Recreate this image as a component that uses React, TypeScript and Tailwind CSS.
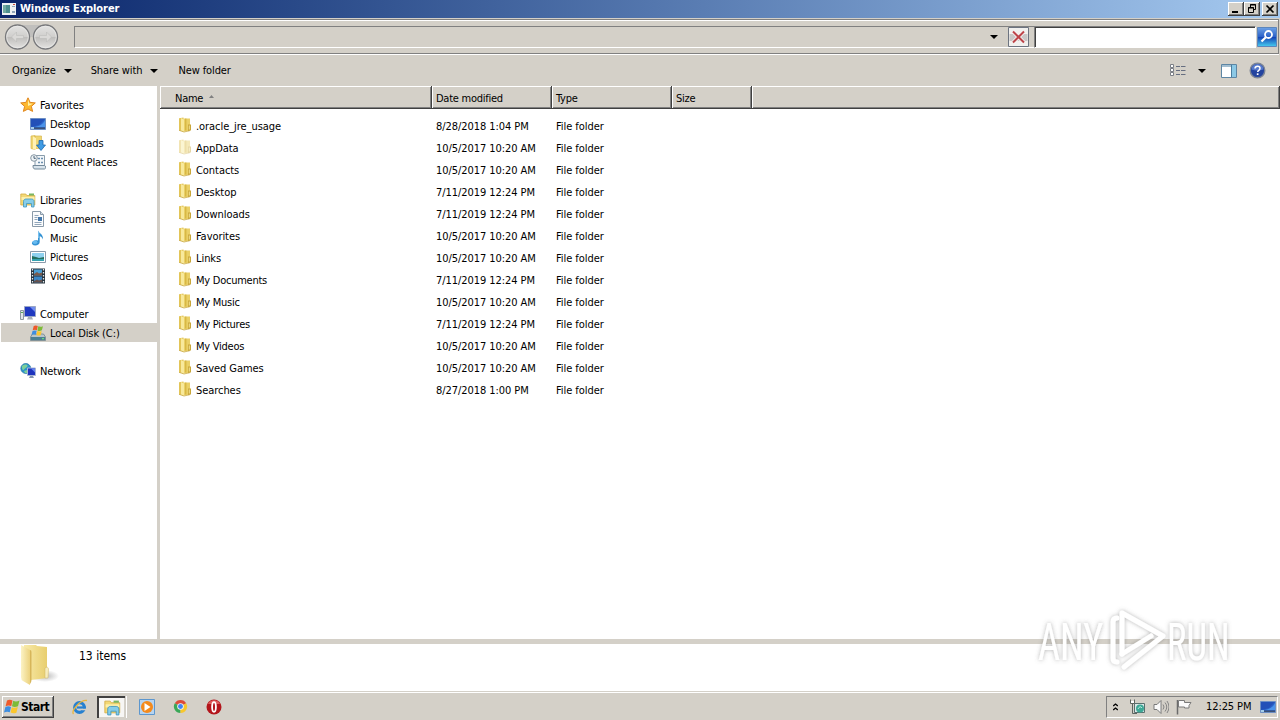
import type { ReactNode } from "react"

type IconProps = { className?: string }

function Svg({ size = 16, className = "", children }: { size?: number; className?: string; children: ReactNode }) {
  return (
    <svg width={size} height={size} viewBox="0 0 16 16" className={`shrink-0 ${className}`} fill="none">
      {children}
    </svg>
  )
}

function StarIcon() {
  return (
    <Svg>
      <path d="M8 .8l2.100 4.600 5.200.500-3.900 3.500 1.200 5L8 12 3.400 14.400l1.200-5L.7 5.900l5.200-.500z" fill="#fdb82e" stroke="#e0861e" />
      <path d="M8 2.500l1.300 4 3.700.3L8 9z" fill="#fff3a8" />
    </Svg>
  )
}

function DesktopIcon() {
  return (
    <Svg>
      <path d="M.5 2.500h15v11H.5z" fill="#2b62c9" stroke="#6d8fc4" />
      <path d="M1 3h14L9 9 1 11z" fill="#2350b8" />
      <path d="M15 4v7H5c5-1 8-3 10-7z" fill="#4b93ea" />
      <path d="M1 11.500h14V13H1z" fill="#3c5275" />
      <path d="M1 11h3v2H1z" fill="#a5cdea" />
    </Svg>
  )
}

function DownloadsIcon() {
  return (
    <Svg>
      <path d="M1 1l4-.5v14l-4-1zM5 1h6.500v12.500H5z" fill="#f0d772" stroke="#d9b851" strokeWidth=".7" />
      <path d="M3 1.500l3 1.500v12l-3-1z" fill="#fff2b6" />
      <path d="M9 5.500h4v4.500h2.500L11 15.500 6.500 10H9z" fill="#3f9be4" stroke="#1c68ad" strokeWidth=".8" />
    </Svg>
  )
}

function RecentIcon() {
  return (
    <Svg>
      <path d="M5 1.500h9.500V12H5z" fill="#f3f7fa" stroke="#899cab" />
      <path d="M3 11.500h11.500c1.500 0 1.500 3.500 0 3.500H5c-1.500 0-2-1-2-3.500z" fill="#d8e3eb" stroke="#73899a" />
      <path d="M8 4.500h2M11 4.500h2M8 8.500h2M11 8.500h2" stroke="#6c8fae" strokeWidth="1.500" />
      <circle cx="4" cy="4" r="3.300" fill="#eef3f6" stroke="#8797a3" />
      <path d="M4 2v2.300h1.800" stroke="#4a6074" />
    </Svg>
  )
}

function LibrariesIcon({ size = 16 }: { size?: number }) {
  return (
    <Svg size={size}>
      <path d="M.8 2h5l1 1.500h8v9.500H.8z" fill="#f3d875" stroke="#d3ac42" strokeWidth=".8" />
      <path d="M9 1.500h5v2H9z" fill="#7bb661" />
      <path d="M1.500 5h13v3h-13z" fill="#fcefac" />
      <path d="M3.500 15V9.500C3.500 7.500 5 7 6 7h5.500c1 0 2.500.5 2.500 2.500V15h-2.500v-3.500h-5V15z" fill="#86cdea" stroke="#3f95bd" strokeWidth=".8" />
    </Svg>
  )
}

function DocumentsIcon() {
  return (
    <Svg>
      <path d="M2.500.5h8l3 3v12h-11z" fill="#fbfcfd" stroke="#8a9aa9" />
      <path d="M10.500.5v3h3" fill="#d5dfe8" stroke="#8a9aa9" />
      <path d="M4.500 4.500h4M4.500 6.500h3M4.500 8.500h3M4.500 11.500h7M4.500 13.500h7" stroke="#92a6ba" />
      <path d="M8 6h4v4H8z" fill="#4276ab" />
    </Svg>
  )
}

function MusicIcon() {
  return (
    <Svg>
      <path d="M8 .5c1 3 5.500 3.500 5 9-.7-2-2-3-3.300-3.300V12c0 2-2 3.500-4.500 3.500S1.500 14 2 12.500 4.500 9.700 8 10.500z" fill="#3593d4" />
      <ellipse cx="5" cy="12.300" rx="2.400" ry="1.700" fill="#66baf0" />
      <path d="M8.700 2v6" stroke="#86cbf5" />
    </Svg>
  )
}

function PicturesIcon() {
  return (
    <Svg>
      <path d="M.5 2.500h15v11H.5z" fill="#fff" stroke="#8b9bab" />
      <path d="M2 4h12v8H2z" fill="#8fd1ef" />
      <path d="M2 7l4 1 3 1 5-1v4H2z" fill="#24705f" />
      <path d="M2 10h12v2H2z" fill="#35a3b0" />
    </Svg>
  )
}

function VideosIcon() {
  return (
    <Svg>
      <path d="M1 .5h14v15H1z" fill="#26323d" />
      <path d="M4 1.500h8v6H4z" fill="#4a9fd4" />
      <path d="M4 8.500h8v6H4z" fill="#3b87c6" />
      <path d="M4 6l3-2 2 1.500 3-1v3H4z" fill="#7b5a4b" />
      <path d="M4 13l3-1.500 2 1 3-1v3H4z" fill="#66524f" />
      <path d="M2.500 1v15M13.500 1v15" stroke="#e4e9ec" strokeWidth="1.300" strokeDasharray="1.500 1.500" />
    </Svg>
  )
}

function ComputerIcon() {
  return (
    <Svg>
      <path d="M.5 4.500h3v9h-3z" fill="#e0e5e8" stroke="#8d989f" />
      <path d="M1 6.500h2" stroke="#58a957" />
      <path d="M4.500.5h11v10h-11z" fill="#1f39c0" stroke="#9aa6c5" />
      <path d="M10 1h5v5z" fill="#6f8cf0" />
      <path d="M8 11h4l1 2.500H7z" fill="#a7afb9" />
    </Svg>
  )
}

function FlagPanes() {
  return (
    <>
      <path d="M3 1.500Q5.500 0 8.500 1.400L7.300 7Q4.500 5.800 1.600 7.200z" fill="#ee5a2a" />
      <path d="M9.200 1.800Q12 3.200 15.500 1.600L14 7.200Q10.700 8.700 8 7.300z" fill="#7dbb37" />
      <path d="M1.400 8Q4.200 6.800 7 7.900l-1.200 5.300Q3 12 0 13.500z" fill="#3e8ee0" />
      <path d="M7.800 8.200Q10.700 9.400 13.800 8.100l-1.400 5.600Q9.500 15 6.600 13.600z" fill="#fbc62c" />
    </>
  )
}

function DiskIcon() {
  return (
    <Svg>
      <path d="M2.500 9h11l2 3v3.500H.5V12z" fill="#b9c5ca" stroke="#70838c" strokeWidth=".8" />
      <path d="M1 12h14v3H1z" fill="#4c7f92" />
      <path d="M12 13.700h2" stroke="#71f07a" />
      <g transform="translate(1.500 0) scale(.74)">
        <FlagPanes />
      </g>
    </Svg>
  )
}

function NetworkIcon() {
  return (
    <Svg>
      <circle cx="5.800" cy="5.500" r="5" fill="#2b93c9" stroke="#2273a3" strokeWidth=".7" />
      <path d="M2 3c2-2 5-2 5.500-.5S5 5 4 6.500 1.500 6 2 3zM4 8l3-1v3H5z" fill="#7bcf9a" />
      <path d="M7.500 5h8v7.500h-8z" fill="#1d33bd" stroke="#a9b5d3" />
      <path d="M11 5.500h4v4z" fill="#6484ef" />
      <path d="M10 13h3l1 2H9z" fill="#8696b0" />
    </Svg>
  )
}

function FolderIcon({ className = "" }: IconProps) {
  return (
    <Svg className={className}>
      <path d="M2 1.200L6.500.5v14L2 13.500z" fill="#e3c558" />
      <path d="M6 1.500h7v12L7 14.500z" fill="#ead067" />
      <path d="M4 1l3 1.500v12.500l-3-1.300z" fill="#f8e99c" />
      <path d="M8.800 1.500v12" stroke="#d1ae38" />
      <path d="M11 7.500h3v5.500l-3 1.300z" fill="#c9a638" />
      <path d="M12.300 8.500v4" stroke="#f2e396" />
      <path d="M2 13.300L7 15l6.500-1.500" stroke="#c9a948" strokeWidth=".8" />
    </Svg>
  )
}

function BigFolderIcon() {
  return (
    <svg width="40" height="44" viewBox="0 0 40 44" className="shrink-0">
      <defs>
        <linearGradient id="folderBack" x1="0" x2="1">
          <stop offset="0" stopColor="#f8eaa9" />
          <stop offset="1" stopColor="#e8ce6e" />
        </linearGradient>
        <linearGradient id="folderFront" x1="0" x2="1">
          <stop offset="0" stopColor="#fcf3c5" />
          <stop offset="1" stopColor="#ecd27f" />
        </linearGradient>
        <radialGradient id="folderShade">
          <stop offset="0" stopColor="#9a9a9a" stopOpacity=".7" />
          <stop offset="1" stopColor="#9a9a9a" stopOpacity="0" />
        </radialGradient>
      </defs>
      <ellipse cx="25" cy="32" rx="14" ry="6" fill="url(#folderShade)" />
      <path d="M4 1h12l1 1 10 1v31l-16 2L4 30z" fill="url(#folderBack)" />
      <path d="M1 1l9 5v35l-7-4q-2-1-2-4z" fill="url(#folderFront)" />
      <path d="M10 6q1.500 0 1.500 2v28q0 2-1.500 4z" fill="#d7b65a" />
      <path d="M25 24q3-2 3.500 1l-.5 9h-3z" fill="#f7edbd" stroke="#cfb565" strokeWidth=".5" />
    </svg>
  )
}

function Caret() {
  return (
    <svg width="8" height="4" viewBox="0 0 8 4" className="shrink-0">
      <path d="M0 0h8L4 4z" fill="#000" />
    </svg>
  )
}

function NavButtons() {
  return (
    <svg width="56" height="28" viewBox="0 0 56 28" className="shrink-0">
      <defs>
        <linearGradient id="navFace" x2="0" y2="1">
          <stop offset="0" stopColor="#e4e4e3" />
          <stop offset=".48" stopColor="#d0cfcd" />
          <stop offset=".52" stopColor="#bfbebc" />
          <stop offset="1" stopColor="#e6e5e3" />
        </linearGradient>
      </defs>
      <path d="M14 2h28v8q-14 8-28 0z" fill="#c0bfbd" />
      {[14.500, 42.500].map((cx) => (
        <g key={cx}>
          <circle cx={cx} cy="14" r="12" fill="url(#navFace)" stroke="#77787b" strokeWidth="1.300" />
          <circle cx={cx} cy="14" r="10.800" fill="none" stroke="#ebebea" strokeWidth=".7" />
        </g>
      ))}
      <path d="M13.500 9l-5 5 5 5v-3.500h7v-3h-7z" fill="#dad9d7" stroke="#b9b8b6" strokeWidth=".5" />
      <path d="M43.500 9l5 5-5 5v-3.500h-7v-3h7z" fill="#dad9d7" stroke="#b9b8b6" strokeWidth=".5" />
    </svg>
  )
}

function AppIcon() {
  return (
    <svg width="14" height="12" viewBox="0 0 14 12" className="shrink-0">
      <path d="M0 0h14v12H0z" fill="#eef1f3" />
      <path d="M1 2h7v8H1z" fill="#4e8f8f" />
      <path d="M1 2h3v8H1z" fill="#72aaa1" />
      <path d="M10 3h3v1h-3zM10 8h3v2h-3z" fill="#93a7bb" />
      <path d="M11 1h2v1h-2z" fill="#cc4b3c" />
    </svg>
  )
}

function SearchIcon() {
  return (
    <svg width="20" height="20" viewBox="0 0 20 20" className="shrink-0">
      <defs>
        <linearGradient id="searchFace" x2="0" y2="1">
          <stop offset="0" stopColor="#6ea2e5" />
          <stop offset=".48" stopColor="#2c62c9" />
          <stop offset=".5" stopColor="#123fb4" />
          <stop offset="1" stopColor="#46cdf0" />
        </linearGradient>
      </defs>
      <path d="M.5.5h19v19H.5z" fill="url(#searchFace)" stroke="#5d86bb" />
      <circle cx="11.500" cy="7.500" r="3.500" fill="none" stroke="#fff" strokeWidth="1.800" />
      <path d="M8.800 10.300L4.500 14.500" stroke="#fff" strokeWidth="2.300" />
    </svg>
  )
}

function StopIcon() {
  return (
    <svg width="21" height="20" viewBox="0 0 21 20" className="shrink-0">
      <path d="M.5.5h20v19H.5z" fill="#f1f0ee" stroke="#6d7480" />
      <path d="M1.500 7h18v7h-18z" fill="#c9c7c6" />
      <path d="M5 4.500l11 11M16 4.500l-11 11" stroke="#f8f4f4" strokeWidth="3.800" />
      <path d="M5 4.500l11 11M16 4.500l-11 11" stroke="#bd4449" strokeWidth="2" />
    </svg>
  )
}

function ViewIcon() {
  return (
    <svg width="16" height="13" viewBox="0 0 16 13" className="shrink-0" fill="none">
      <path d="M.5.500h3v3h-3zM.5 4.500h3v3h-3zM.5 8.500h3v3h-3z" fill="#fff" stroke="#7b7f86" />
      <path d="M6 2.500h4M11 2.500h4.500M6 6.500h4M11 6.500h4.500M6 10.500h4M11 10.500h4.500" stroke="#666e80" />
    </svg>
  )
}

function PreviewIcon() {
  return (
    <svg width="16" height="14" viewBox="0 0 16 14" className="shrink-0" fill="none">
      <path d="M.5.500h15v13H.5z" fill="#fff" stroke="#5d86a4" />
      <path d="M1 2h9" stroke="#a3bed0" strokeWidth="2" />
      <path d="M10 1h5v12h-5z" fill="#8cc9e6" />
      <path d="M10.500 1v12" stroke="#4a7d9f" />
    </svg>
  )
}

function HelpIcon() {
  return (
    <svg width="17" height="17" viewBox="0 0 17 17" className="shrink-0" fill="none">
      <circle cx="8.500" cy="8.500" r="7.300" fill="#23439f" stroke="#7c8595" strokeWidth="1.400" />
      <path d="M2.500 7.500a6 5.500 0 0 1 12 0q-6 2-12 0z" fill="#5578cb" />
      <path d="M6 6.500Q6.200 4.300 8.600 4.300q2.400 0 2.400 2 0 1.200-1.200 2-1.100.7-1.100 1.700" stroke="#fff" strokeWidth="1.500" />
      <path d="M7.800 11.300h1.700v1.700H7.800z" fill="#fff" />
    </svg>
  )
}

function Watermark() {
  return (
    <svg width="220" height="80" viewBox="0 0 220 80" className="absolute left-[1030px] top-[600px]">
      <defs>
        <filter id="glow" x="-10%" y="-10%" width="120%" height="125%">
          <feDropShadow dx="0" dy="0" stdDeviation="2" floodColor="#666" floodOpacity=".5" />
        </filter>
      </defs>
      <g filter="url(#glow)" fill="#fff" fontFamily="Roboto, sans-serif" fontSize="52">
        <text transform="translate(8 60) scale(.735 1)">ANY</text>
        <text transform="translate(137 60) scale(.705 1)">RUN</text>
        <g fill="none" stroke="#fff" strokeWidth="5" strokeLinejoin="round" strokeLinecap="round">
          <path d="M87 18q-4 0-4 4v36q0 4 4 4" />
          <path d="M92 54V13l41 23-39 31" />
          <path d="M92 54l29-18" />
        </g>
      </g>
    </svg>
  )
}

const navGroups = [
  {
    name: "Favorites",
    icon: <StarIcon />,
    items: [
      { name: "Desktop", icon: <DesktopIcon /> },
      { name: "Downloads", icon: <DownloadsIcon /> },
      { name: "Recent Places", icon: <RecentIcon /> },
    ],
  },
  {
    name: "Libraries",
    icon: <LibrariesIcon />,
    items: [
      { name: "Documents", icon: <DocumentsIcon /> },
      { name: "Music", icon: <MusicIcon /> },
      { name: "Pictures", icon: <PicturesIcon /> },
      { name: "Videos", icon: <VideosIcon /> },
    ],
  },
  {
    name: "Computer",
    icon: <ComputerIcon />,
    items: [{ name: "Local Disk (C:)", icon: <DiskIcon />, selected: true }],
  },
  { name: "Network", icon: <NetworkIcon />, items: [] },
]

const files = [
  { name: ".oracle_jre_usage", date: "8/28/2018 1:04 PM" },
  { name: "AppData", date: "10/5/2017 10:20 AM", hidden: true },
  { name: "Contacts", date: "10/5/2017 10:20 AM" },
  { name: "Desktop", date: "7/11/2019 12:24 PM" },
  { name: "Downloads", date: "7/11/2019 12:24 PM" },
  { name: "Favorites", date: "10/5/2017 10:20 AM" },
  { name: "Links", date: "10/5/2017 10:20 AM" },
  { name: "My Documents", date: "7/11/2019 12:24 PM" },
  { name: "My Music", date: "10/5/2017 10:20 AM" },
  { name: "My Pictures", date: "7/11/2019 12:24 PM" },
  { name: "My Videos", date: "10/5/2017 10:20 AM" },
  { name: "Saved Games", date: "10/5/2017 10:20 AM" },
  { name: "Searches", date: "8/27/2018 1:00 PM" },
]

const columns = [
  { name: "Name", className: "w-[272px] pl-[15px]", sorted: true },
  { name: "Date modified", className: "w-[120px] pl-1" },
  { name: "Type", className: "w-[120px] pl-1" },
  { name: "Size", className: "w-[80px] pl-1" },
  { name: "", className: "flex-1" },
]

function CaptionButton({ className = "", children }: { className?: string; children: ReactNode }) {
  return (
    <div
      className={`h-[14px] w-4 bg-[#d4d0c8] shadow-[inset_-1px_-1px_#404040,inset_1px_1px_#fff,inset_-2px_-2px_#808080] ${className}`}
    >
      <svg width="16" height="14" viewBox="0 0 16 14" fill="none" stroke="#000">
        {children}
      </svg>
    </div>
  )
}

function TitleBar() {
  return (
    <div className="flex h-[18px] items-center bg-linear-to-r from-[#0a246a] to-[#a6caf0] pl-[2px] pr-[2px]">
      <AppIcon />
      <span className="ml-1 text-[11px] font-bold tracking-[-0.08px] text-white">Windows Explorer</span>
      <div className="ml-auto flex">
        <CaptionButton>
          <path d="M4 10h6" strokeWidth="2" />
        </CaptionButton>
        <CaptionButton>
          <path d="M6.500 5V2.500h5v5H9.500M6 3h6M4.500 5.500h5v5h-5zM4 6h6" />
        </CaptionButton>
        <CaptionButton className="ml-[2px]">
          <path d="M4.500 3.500l7 7M11.500 3.500l-7 7" strokeWidth="1.700" />
        </CaptionButton>
      </div>
    </div>
  )
}

function AddressBar() {
  return (
    <div className="mr-px mt-px flex h-[35px] items-center border-b border-r border-t border-[#808080] pl-[3px] pr-px shadow-[inset_0_1px_#fff,0_1px_#fff]">
      <NavButtons />
      <div className="ml-[15px] flex h-[22px] flex-1 items-center justify-end border-b border-l border-t border-b-white border-l-[#808080] border-t-[#808080]">
        <Caret />
        <div className="ml-[10px] mr-[5px]">
          <StopIcon />
        </div>
      </div>
      <div className="mr-px h-[22px] w-[222px] border border-[#808080] border-b-white border-r-white bg-white shadow-[inset_1px_1px_#404040]" />
      <SearchIcon />
    </div>
  )
}

function Toolbar() {
  return (
    <div className="mt-px flex h-[31px] items-center pl-3 pr-[14px]">
      <span className="tracking-[-0.08px]">Organize</span>
      <span className="ml-2">
        <Caret />
      </span>
      <span className="ml-[19px] tracking-[-0.1px]">Share with</span>
      <span className="ml-2">
        <Caret />
      </span>
      <span className="ml-5 tracking-[-0.1px]">New folder</span>
      <div className="ml-auto flex items-center">
        <ViewIcon />
        <span className="ml-3 mr-[15px]">
          <Caret />
        </span>
        <PreviewIcon />
        <span className="ml-3">
          <HelpIcon />
        </span>
      </div>
    </div>
  )
}

function NavPane() {
  return (
    <div className="flex w-[157px] shrink-0 flex-col gap-[19px] bg-white pt-[9px]">
      {navGroups.map((group) => (
        <div key={group.name}>
          <div className="flex h-[19px] items-center gap-1 pl-5 tracking-[-0.1px]">
            {group.icon}
            <span className="pt-[2px]">{group.name}</span>
          </div>
          {group.items.map((item) => (
            <div
              key={item.name}
              className={`ml-px flex h-[19px] items-center gap-1 pl-[29px] tracking-[-0.1px] ${"selected" in item ? "bg-[#d4d0c8]" : ""}`}
            >
              {item.icon}
              <span className="pt-[2px]">{item.name}</span>
            </div>
          ))}
        </div>
      ))}
    </div>
  )
}

function FileList() {
  return (
    <div className="flex flex-1 flex-col bg-white">
      <div className="flex h-[23px] bg-[#d4d0c8] tracking-[-0.25px]">
        {columns.map((col) => (
          <div
            key={col.name}
            className={`flex items-center shadow-[inset_-1px_-1px_#404040,inset_1px_1px_#fff,inset_-2px_-2px_#808080] ${col.className}`}
          >
            <span className="pt-[2px]">{col.name}</span>
            {col.sorted && (
              <svg width="5" height="3" viewBox="0 0 5 3" className="mb-[3px] ml-[6px]">
                <path d="M0 3h5L2.500 0z" fill="#808080" />
              </svg>
            )}
          </div>
        ))}
      </div>
      <div className="pt-[6px]">
        {files.map((file) => (
          <div key={file.name} className="flex h-[22px] items-center tracking-[-0.06px]">
            <div className="flex w-[276px] items-center gap-[3px] pl-[17px]">
              <FolderIcon className={file.hidden ? "mb-[2px] opacity-45" : "mb-[2px]"} />
              <span className={file.name.startsWith("My ") ? "pt-[2px] tracking-[-0.25px]" : "pt-[2px]"}>{file.name}</span>
            </div>
            <span className="w-[120px] pt-[2px]">{file.date}</span>
            <span className="pt-[2px]">File folder</span>
          </div>
        ))}
      </div>
    </div>
  )
}

function DetailsPane() {
  return (
    <div className="flex h-[47px] bg-white pl-5">
      <BigFolderIcon />
      <span className="ml-[19px] mt-[3px] text-[12px] leading-[18px]">13 items</span>
    </div>
  )
}

function Taskbar() {
  return (
    <div className="flex h-7 items-center border-t border-white bg-[#d4d0c8] pl-[2px] pr-[2px]">
      <div className="flex h-[22px] w-[52px] items-center gap-px pl-[2px] shadow-[inset_-1px_-1px_#404040,inset_1px_1px_#fff,inset_-2px_-2px_#808080]">
        <Svg>
          <FlagPanes />
        </Svg>
        <span className="text-[12px] font-bold tracking-[-0.5px]">Start</span>
      </div>

      <Svg className="ml-[18px]">
        <circle cx="7.500" cy="8.500" r="4.800" stroke="#2680d0" strokeWidth="3.200" />
        <path d="M5 8.500h9" stroke="#2680d0" strokeWidth="2.200" />
        <path d="M10 10.500h5" stroke="#d4d0c8" strokeWidth="1.500" />
        <path d="M1.500 15C-1 12 8 .5 15 1.500" stroke="#e9b53c" strokeWidth="1.300" />
      </Svg>

      <div className="ml-[9px] flex h-[22px] w-7 items-center justify-center border-l-2 border-t-2 border-[#404040] bg-[#f7f6f4] shadow-[inset_-1px_-1px_#d4d0c8]">
        <LibrariesIcon size={17} />
      </div>
      <div className="ml-px h-[22px] w-px bg-[#fff]" />

      <Svg className="ml-3">
        <path d="M.5.500h15v15H.5z" fill="#b7d4f0" stroke="#5d97ce" />
        <circle cx="8" cy="8" r="6" fill="#f48a1c" />
        <path d="M5.500 4L11.500 8 5.500 12z" fill="#fff" />
      </Svg>

      <Svg className="ml-[18px]" size={15}>
        <path d="M8 8L1.900 4.500A7 7 0 0 1 14.100 4.500z" fill="#dd4b39" />
        <path d="M8 8L1.900 4.500A7 7 0 0 0 8 15z" fill="#3aa757" />
        <path d="M8 8h6.100M8 8l6.100-3.500A7 7 0 0 1 8 15z" fill="#f8c72c" />
        <circle cx="8" cy="8" r="3.500" fill="#f4f4f4" />
        <circle cx="8" cy="8" r="2.600" fill="#4285f4" />
      </Svg>

      <Svg className="ml-[18px]">
        <circle cx="8" cy="8" r="7.500" fill="#b3151b" />
        <path d="M2 5a6.500 6 0 0 1 12 0z" fill="#df5a5a" />
        <ellipse cx="8" cy="8" rx="1.900" ry="4.800" fill="#b3151b" stroke="#fff" strokeWidth="1.800" />
      </Svg>

      <div className="ml-auto flex h-[22px] w-[172px] items-center border border-[#808080] border-b-white border-r-white pl-[6px]">
        <svg width="5" height="8" viewBox="0 0 5 8" fill="none" stroke="#000" strokeWidth="1.300">
          <path d="M.2 3L2.500 1l2.300 2M.2 7L2.500 5l2.300 2" />
        </svg>
        <Svg className="ml-[11px]">
          <path d="M5.500 4.500h10v9h-10z" fill="#dce9e8" stroke="#59706f" />
          <circle cx="11" cy="9.500" r="4" fill="#3da896" />
          <path d="M9 10q2-4 4-1" stroke="#b9ece0" />
          <path d="M1.500.500v4h4v-4M3.500 5v9.500H8" stroke="#5e6461" />
          <path d="M2 2h3v2H2z" fill="#fff" />
        </Svg>
        <Svg className="ml-2">
          <path d="M1 5.500h3l4-4v13l-4-4H1z" fill="#fafafa" stroke="#7a7a7a" />
          <path d="M10 5.500q2 2.500 0 5M12 3.500q3.500 4.500 0 9M14 2q4 6 0 12" stroke="#848484" />
        </Svg>
        <Svg className="ml-[7px]">
          <path d="M1.500 1v14.500" stroke="#6b6b6b" strokeWidth="1.500" />
          <path d="M2.500 1.500h6v2h6.500l-2 3v2.500H8.500V8h-6z" fill="#fafafa" stroke="#7a7a7a" />
        </Svg>
        <span className="ml-[14px] pt-px tracking-[-0.1px]">12:25 PM</span>
        <span className="ml-auto mr-px">
          <DesktopIcon />
        </span>
      </div>
    </div>
  )
}

export default function App() {
  return (
    <div className="relative flex h-[720px] w-[1280px] flex-col overflow-hidden whitespace-nowrap bg-[#d4d0c8] font-['DejaVu_Sans_Condensed','DejaVu_Sans',sans-serif] text-[11px] leading-[14px] text-black [font-stretch:condensed]">
      <TitleBar />
      <AddressBar />
      <Toolbar />
      <div className="flex flex-1 gap-[3px]">
        <NavPane />
        <FileList />
      </div>
      <div className="h-[5px] shrink-0" />
      <DetailsPane />
      <div className="h-px shrink-0 bg-[#d4d0c8]" />
      <Taskbar />
      <Watermark />
    </div>
  )
}
